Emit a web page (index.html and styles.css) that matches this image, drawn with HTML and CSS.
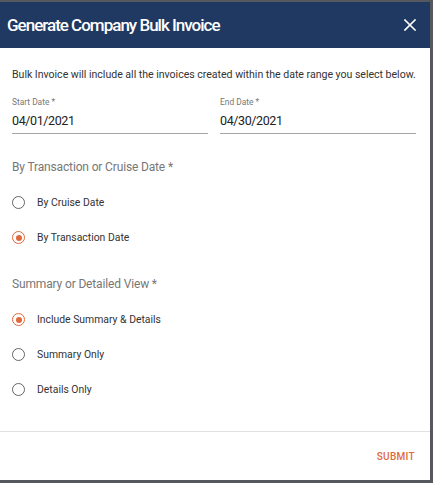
FILE: index.html
```html
<!DOCTYPE html>
<html lang="en">
<head>
  <meta charset="UTF-8" />
  <title>Generate Company Bulk Invoice</title>
  <link rel="stylesheet" href="styles.css">
</head>
<body>
  <div class="dialog">
    <div class="dialog-header">
      <h2>Generate Company Bulk Invoice</h2>
      <button class="close" type="button" aria-label="Close">
        <svg width="12" height="12" viewBox="0 0 12 12"><path d="M1 1L11 11M11 1L1 11" stroke="#fff" stroke-width="1.6" stroke-linecap="square"/></svg>
      </button>
    </div>

    <div class="dialog-body">
      <p class="intro">Bulk Invoice will include all the invoices created within the date range you select below.</p>

      <div class="dates">
        <div class="field">
          <label>Start Date *</label>
          <div class="value">04/01/2021</div>
        </div>
        <div class="field">
          <label>End Date *</label>
          <div class="value">04/30/2021</div>
        </div>
      </div>

      <div class="group">
        <div class="group-title">By Transaction or Cruise Date *</div>
        <label class="radio"><span class="dot"></span>By Cruise Date</label>
        <label class="radio checked"><span class="dot"></span>By Transaction Date</label>
      </div>

      <div class="group">
        <div class="group-title">Summary or Detailed View *</div>
        <label class="radio checked"><span class="dot"></span>Include Summary &amp; Details</label>
        <label class="radio"><span class="dot"></span>Summary Only</label>
        <label class="radio"><span class="dot"></span>Details Only</label>
      </div>
    </div>

    <div class="dialog-footer">
      <button class="submit" type="button">SUBMIT</button>
    </div>
  </div>
</body>
</html>
```

FILE: styles.css
```css
body {
  margin: 0;
  background: #55585c;
  font-family: Roboto, "Liberation Sans", sans-serif;
  height: 483px;
  overflow: hidden;
}

.dialog {
  width: 430px;
  height: 478px;
  margin-top: 2px;
  background: #fff;
  display: flex;
  flex-direction: column;
}

.dialog-header {
  height: 46px;
  flex-shrink: 0;
  background: #1f3962;
  display: flex;
  align-items: center;
  justify-content: space-between;
  padding: 0 14px 0 7px;
}

.dialog-header h2 {
  margin: 0;
  color: #fff;
  font-size: 17px;
  font-weight: 500;
  letter-spacing: -1px;
}

.close {
  background: none;
  border: none;
  padding: 0;
  display: flex;
}

.dialog-body {
  padding: 0 14px 0 12px;
  flex: 1;
  overflow: hidden;
}

.intro {
  margin: 20px 0 16px;
  font-size: 10.6px;
  color: #333;
  white-space: nowrap;
  letter-spacing: -0.03px;
}

.dates {
  display: flex;
  gap: 12px;
}

.field {
  flex: 1;
  border-bottom: 1px solid #a5a5a5;
  padding-bottom: 5px;
}

.field label {
  display: block;
  font-size: 8.4px;
  color: #777;
}

.field .value {
  font-size: 12.5px;
  color: #222;
  margin-top: 6px;
  letter-spacing: -0.4px;
}

.group {
  margin-top: 26px;
}

.group + .group {
  margin-top: 22px;
}

.group-title {
  font-size: 12px;
  color: #777;
  margin-bottom: 11px;
  letter-spacing: -0.15px;
}

.radio {
  display: flex;
  align-items: center;
  height: 35px;
  font-size: 10.4px;
  color: #333;
}

.dot {
  width: 11px;
  height: 11px;
  border: 1.5px solid #666;
  border-radius: 50%;
  margin: 0 12px 0 0;
  position: relative;
}

.radio.checked .dot {
  border-color: #e0693c;
}

.radio.checked .dot::after {
  content: "";
  position: absolute;
  left: 2.5px;
  top: 2.5px;
  width: 6px;
  height: 6px;
  border-radius: 50%;
  background: #e0693c;
}

.dialog-footer {
  border-top: 1px solid #e2e2e2;
  height: 48px;
  flex-shrink: 0;
  display: flex;
  align-items: center;
  justify-content: flex-end;
  padding-right: 15px;
}

.submit {
  background: none;
  border: none;
  padding: 0;
  color: #e0693c;
  font-family: Roboto, "Liberation Sans", sans-serif;
  font-size: 10px;
  font-weight: 500;
  letter-spacing: 0.3px;
}
```
